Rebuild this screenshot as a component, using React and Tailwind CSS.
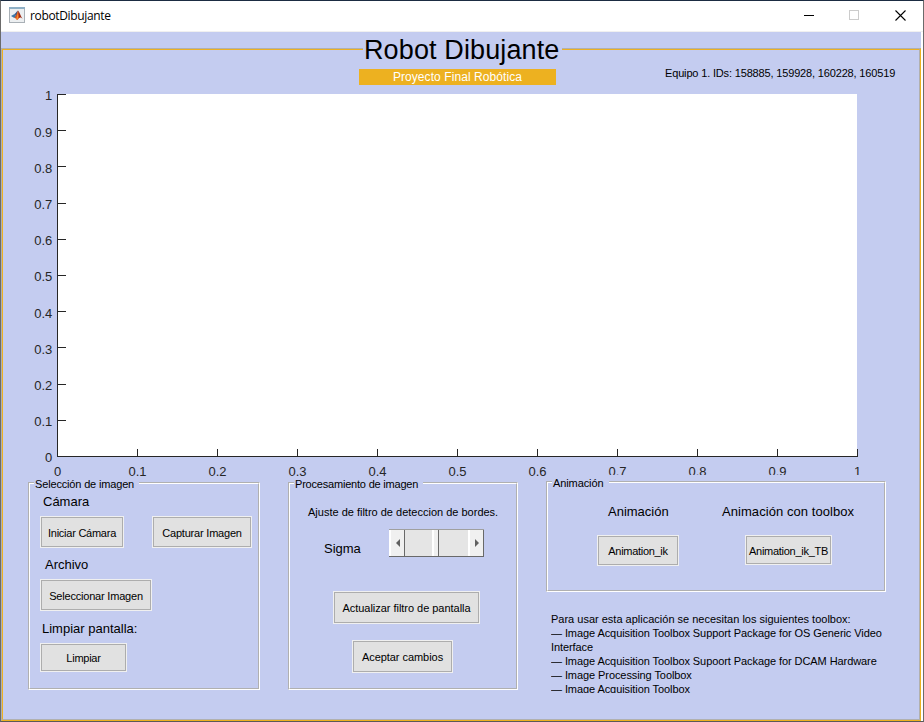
import React from "react";

const ticks = [0, 1, 2, 3, 4, 5, 6, 7, 8, 9, 10];
const label = (i) => (i === 0 ? "0" : i === 10 ? "1" : `0.${i}`);

function Etched({ className, inner, children }) {
  return (
    <div className={`box-border flex border border-t-[#b0b0b0] border-l-[#b0b0b0] ${className}`}>
      <div className={`flex min-w-0 flex-1 flex-col border border-r-[#b0b0b0] border-b-[#b0b0b0] ${inner}`}>
        {children}
      </div>
    </div>
  );
}

function Panel({ title, titleClass, className, children }) {
  return (
    <Etched className={`shrink-0 border-r-white border-b-white ${className}`} inner="border-t-white border-l-white">
      <div className={`-mt-[7px] mb-[-1px] ml-1 h-[14px] shrink-0 whitespace-nowrap bg-[#c4ccf0] pl-px text-[11px] leading-[14px] ${titleClass}`}>
        {title}
      </div>
      {children}
    </Etched>
  );
}

function Button({ className, children }) {
  return (
    <button className={`flex shrink-0 border border-[#f0f0f0] text-[11px] ${className}`}>
      <span className="flex h-full w-full items-center justify-center whitespace-nowrap border border-[#adadad] bg-[#e1e1e1] pt-0.5 leading-none">
        {children}
      </span>
    </button>
  );
}

function MatlabIcon() {
  return (
    <svg width="16" height="16" viewBox="0 0 16 16" className="shrink-0">
      <rect x="0.5" y="0.5" width="15" height="15" fill="#eceff1" stroke="#a9b0b6" />
      <rect x="0" y="0" width="16" height="2" fill="#8fb0c6" />
      <path d="M2 9 L5.5 7 L7.5 9.2 L5.3 11z" fill="#3b78a8" />
      <path d="M5.5 7 C7 6.4 7.6 4 9 3.5 L7.5 9.2z" fill="#31558a" />
      <path d="M9 3.5 C7.8 6.5 7 9 5.3 11 C6.8 10.6 7.4 12.6 8 13 C9.5 12.6 10 10.5 11 10.3z" fill="#d9501c" />
      <path d="M9 3.5 C10.5 5 11.8 9.5 13.5 11.6 C12 10.2 11.3 10.2 10.2 10.9z" fill="#9c2c17" />
      <path d="M8.7 5.2 C8.6 8 7.8 10.5 7.2 11.5 L8 13 C9.4 11.4 9.6 8 8.7 5.2z" fill="#f59a34" />
    </svg>
  );
}

function TitleBar() {
  return (
    <div className="flex h-[31px] shrink-0 items-start border-b border-[#f0f0f0] bg-white">
      <div className="mt-1.5 ml-2">
        <MatlabIcon />
      </div>
      <div className="mt-[7px] ml-[5px] w-[774px] whitespace-nowrap font-['Open_Sans',sans-serif] text-[12px] leading-4 tracking-[-0.35px]">
        robotDibujante
      </div>
      <svg width="102" height="11" viewBox="0 0 102 11" className="mt-[9px]" shapeRendering="crispEdges">
        <rect x="0" y="5" width="10" height="1" fill="#000" />
        <rect x="45.5" y="0.5" width="9" height="9" fill="none" stroke="#ccc" />
        <path d="M91.5 0.5 L101.5 10.5 M101.5 0.5 L91.5 10.5" stroke="#000" strokeWidth="1.1" shapeRendering="auto" />
      </svg>
    </div>
  );
}

function Axes() {
  return (
    <svg width="916" height="383" viewBox="3 94 916 383" className="block shrink-0 overflow-visible" fontSize="13" fill="#262626">
      <rect x="57" y="94" width="800" height="363" fill="#fff" />
      <g shapeRendering="crispEdges">
        <rect x="57" y="94" width="1" height="363" />
        <rect x="57" y="456" width="801" height="1" />
        {ticks.map((i) => (
          <React.Fragment key={i}>
            <rect x={57 + 80 * i} y="449" width="1" height="8" />
            <rect x="57" y={Math.round(456 - 36.2 * i)} width="9" height="1" />
          </React.Fragment>
        ))}
      </g>
      {ticks.map((i) => (
        <React.Fragment key={i}>
          <text x="52.3" y={462.4 - 36.2 * i} textAnchor="end">{label(i)}</text>
          <text x={57.5 + 80 * i} y="476" textAnchor="middle">{label(i)}</text>
        </React.Fragment>
      ))}
      <rect x="547" y="475" width="339" height="3" fill="#c4ccf0" />
    </svg>
  );
}

function Slider() {
  return (
    <div className="flex h-7 w-[95px] shrink-0 border-t border-b border-t-[#a0a0a0] border-b-[#696969] bg-[#e5e5e5]">
      <div className="flex w-4 items-center justify-center border-r border-l-2 border-l-white border-r-[#696969] bg-[#f0f0f0]">
        <svg width="4" height="8" viewBox="0 0 4 8"><path d="M4 0 L0 4 L4 8z" fill="#606060" /></svg>
      </div>
      <div className="w-[27px]" />
      <div className="w-[7px] border-r border-l-2 border-l-white border-r-[#696969] bg-[#f0f0f0]" />
      <div className="w-[29px]" />
      <div className="flex w-4 items-center justify-center border-r border-l-2 border-l-white border-r-[#696969] bg-[#f0f0f0]">
        <svg width="4" height="8" viewBox="0 0 4 8"><path d="M0 0 L4 4 L0 8z" fill="#606060" /></svg>
      </div>
    </div>
  );
}

const heading = "shrink-0 whitespace-nowrap text-[13px] leading-4";

export default function App() {
  return (
    <div className="flex h-[722px] w-[924px] flex-col overflow-hidden border-t border-r border-b border-l border-t-[#1b2c42] border-r-[#6b6b6b] border-b-[#5a5a58] border-l-[#6b6b6b] bg-[#c4ccf0] font-['Liberation_Sans',Arial,sans-serif] text-black">
      <TitleBar />
      <div className="flex h-[689px] border-r-2 border-white">
        <Etched className="mt-4 h-[673px] w-[920px] border-r-[#edb120] border-b-[#edb120]" inner="border-t-[#edb120] border-l-[#edb120]">
          <div className="-mt-4 ml-[360px] h-[34px] w-[199px] shrink-0 whitespace-nowrap bg-[#c4ccf0] pl-px text-[27px] leading-[33px] tracking-[0.12px]">
            Robot Dibujante
          </div>
          <div className="flex h-[26px] shrink-0">
            <div className="mt-px ml-[356px] h-4 w-[197px] bg-[#edb120] text-center text-xs leading-4 tracking-[0.08px] text-white">
              Proyecto Final Robótica
            </div>
            <div className="-mt-px ml-[109px] whitespace-nowrap text-[11px] leading-3 tracking-[-0.16px]">
              Equipo 1. IDs: 158885, 159928, 160228, 160519
            </div>
          </div>
          <Axes />
          <div className="flex items-start">
            <Panel title="Selección de imagen" titleClass="w-[105px] tracking-[-0.16px]" className="mt-[5px] ml-[25px] h-52 w-[232px]">
              <div className={`${heading} mt-1 ml-[13px]`}>Cámara</div>
              <div className="mt-1.5 ml-2.5 flex gap-7">
                <Button className="h-8 w-[84px] tracking-[-0.25px]">Iniciar Cámara</Button>
                <Button className="h-8 w-[100px] tracking-[-0.2px]">Capturar Imagen</Button>
              </div>
              <div className={`${heading} mt-[9px] ml-[15px]`}>Archivo</div>
              <Button className="mt-1.5 ml-2.5 h-8 w-28 tracking-[-0.2px]">Seleccionar Imagen</Button>
              <div className={`${heading} mt-2.5 ml-3`}>Limpiar pantalla:</div>
              <Button className="mt-1.5 ml-2.5 h-[29px] w-[87px] tracking-[-0.25px]">Limpiar</Button>
            </Panel>
            <Panel title="Procesamiento de imagen" titleClass="w-[129px] tracking-[-0.2px]" className="mt-[5px] ml-7 h-52 w-[230px]">
              <div className="mt-[15px] ml-[18px] whitespace-nowrap text-[11px] leading-[14px]">
                Ajuste de filtro de deteccion de bordes.
              </div>
              <div className="mt-2.5 ml-[34px] flex">
                <div className={`${heading} mt-3 w-[65px]`}>Sigma</div>
                <Slider />
              </div>
              <Button className="mt-[34px] ml-[43px] h-[33px] w-[147px] tracking-[-0.03px]">Actualizar filtro de pantalla</Button>
              <Button className="mt-4 ml-[62px] h-[33px] w-[101px] tracking-[-0.05px]">Aceptar cambios</Button>
            </Panel>
            <div className="ml-7 flex flex-col">
              <Panel title="Animación" titleClass="w-[57px] tracking-[-0.1px]" className="mt-1 h-[111px] w-[340px]">
                <div className="mt-[15px] flex">
                  <div className={`${heading} ml-[60px] w-[114px]`}>Animación</div>
                  <div className={`${heading} tracking-[0.06px]`}>Animación con toolbox</div>
                </div>
                <div className="mt-[15px] ml-[49px] flex items-start gap-[66px]">
                  <Button className="h-[31px] w-[82px] tracking-[-0.3px]">Animation_ik</Button>
                  <Button className="h-[30px] w-[87px] tracking-[-0.28px]">Animation_ik_TB</Button>
                </div>
              </Panel>
              <div className="mt-5 ml-[5px] h-[81px] w-[345px] overflow-hidden whitespace-nowrap text-[11px] leading-[14px] tracking-[-0.08px]">
                <div className="tracking-normal">Para usar esta aplicación se necesitan los siguientes toolbox:</div>
                <div>— Image Acquisition Toolbox Support Package for OS Generic Video</div>
                <div>Interface</div>
                <div>— Image Acquisition Toolbox Supoort Package for DCAM Hardware</div>
                <div>— Image Processing Toolbox</div>
                <div>— Image Acquisition Toolbox</div>
              </div>
            </div>
          </div>
        </Etched>
      </div>
    </div>
  );
}
